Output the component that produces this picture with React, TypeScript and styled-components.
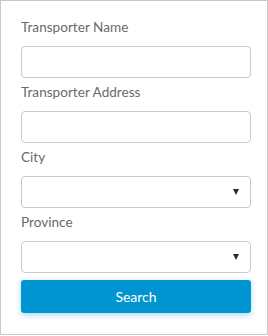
import styled, { createGlobalStyle } from "styled-components";

const GlobalStyle = createGlobalStyle`
  html, body {
    margin: 0;
    padding: 0;
    background: #ffffff;
  }
  * {
    box-sizing: border-box;
  }
`;

const fields = [
  { label: "Transporter Name", kind: "text" },
  { label: "Transporter Address", kind: "text" },
  { label: "City", kind: "select" },
  { label: "Province", kind: "select" },
];

export default function App() {
  return (
    <>
      <GlobalStyle />
      <Panel>
        {fields.map((f) => (
          <Field key={f.label}>
            <Label>{f.label}</Label>
            {f.kind === "text" ? (
              <TextInput type="text" />
            ) : (
              <SelectBox>
                <Caret />
              </SelectBox>
            )}
          </Field>
        ))}
        <SearchButton>Search</SearchButton>
      </Panel>
    </>
  );
}

const Panel = styled.div`
  width: 268px;
  height: 335px;
  border: 1px solid #c8c8c8;
  padding: 17px 16px 0 20px;
  display: flex;
  flex-direction: column;
  font-family: Lato, "Open Sans", sans-serif;
`;

const Field = styled.div`
  display: flex;
  flex-direction: column;
  margin-bottom: 5px;
`;

const Label = styled.label`
  font-size: 13.6px;
  line-height: 18px;
  color: #6a6a6a;
  margin-bottom: 10px;
`;

const TextInput = styled.input`
  width: 230px;
  height: 32px;
  margin: 0;
  border: 1px solid #c9c9c9;
  border-radius: 4px;
  background: #fff;
  outline: none;
  padding: 0 8px;
  font: inherit;
`;

const SelectBox = styled.div`
  width: 230px;
  height: 32px;
  border: 1px solid #c9c9c9;
  border-radius: 4px;
  background: #fff;
  display: flex;
  align-items: center;
  justify-content: flex-end;
  padding-right: 11px;
`;

const Caret = styled.span`
  width: 0;
  height: 0;
  border-left: 3.5px solid transparent;
  border-right: 3.5px solid transparent;
  border-top: 6px solid #2b2b2b;
`;

const SearchButton = styled.button`
  width: 230px;
  height: 33px;
  margin: 2px 0 0;
  padding: 0;
  border: none;
  border-radius: 3px;
  background: #0095d0;
  color: #ffffff;
  font-family: Lato, "Open Sans", sans-serif;
  font-size: 14px;
  box-shadow: 0 2px 6px rgba(0, 149, 208, 0.35);
  cursor: pointer;
`;
